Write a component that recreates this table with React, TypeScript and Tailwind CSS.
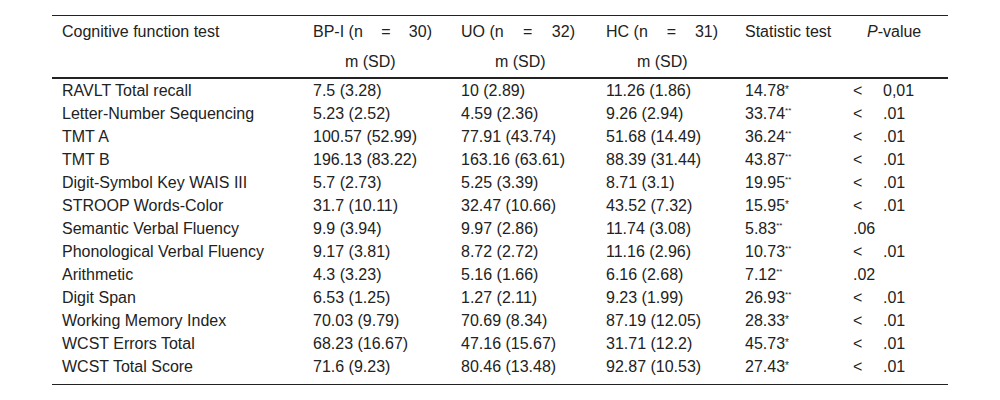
import React from "react";

type Row = {
  name: string;
  bp: string;
  uo: string;
  hc: string;
  stat: string;
  star: "*" | "**";
  lt: boolean;
  p: string;
};

const rows: Row[] = [
  { name: "RAVLT Total recall", bp: "7.5 (3.28)", uo: "10 (2.89)", hc: "11.26 (1.86)", stat: "14.78", star: "*", lt: true, p: "0,01" },
  { name: "Letter-Number Sequencing", bp: "5.23 (2.52)", uo: "4.59 (2.36)", hc: "9.26 (2.94)", stat: "33.74", star: "**", lt: true, p: ".01" },
  { name: "TMT A", bp: "100.57 (52.99)", uo: "77.91 (43.74)", hc: "51.68 (14.49)", stat: "36.24", star: "**", lt: true, p: ".01" },
  { name: "TMT B", bp: "196.13 (83.22)", uo: "163.16 (63.61)", hc: "88.39 (31.44)", stat: "43.87", star: "**", lt: true, p: ".01" },
  { name: "Digit-Symbol Key WAIS III", bp: "5.7 (2.73)", uo: "5.25 (3.39)", hc: "8.71 (3.1)", stat: "19.95", star: "**", lt: true, p: ".01" },
  { name: "STROOP Words-Color", bp: "31.7 (10.11)", uo: "32.47 (10.66)", hc: "43.52 (7.32)", stat: "15.95", star: "*", lt: true, p: ".01" },
  { name: "Semantic Verbal Fluency", bp: "9.9 (3.94)", uo: "9.97 (2.86)", hc: "11.74 (3.08)", stat: "5.83", star: "**", lt: false, p: ".06" },
  { name: "Phonological Verbal Fluency", bp: "9.17 (3.81)", uo: "8.72 (2.72)", hc: "11.16 (2.96)", stat: "10.73", star: "**", lt: true, p: ".01" },
  { name: "Arithmetic", bp: "4.3 (3.23)", uo: "5.16 (1.66)", hc: "6.16 (2.68)", stat: "7.12", star: "**", lt: false, p: ".02" },
  { name: "Digit Span", bp: "6.53 (1.25)", uo: "1.27 (2.11)", hc: "9.23 (1.99)", stat: "26.93", star: "**", lt: true, p: ".01" },
  { name: "Working Memory Index", bp: "70.03 (9.79)", uo: "70.69 (8.34)", hc: "87.19 (12.05)", stat: "28.33", star: "*", lt: true, p: ".01" },
  { name: "WCST Errors Total", bp: "68.23 (16.67)", uo: "47.16 (15.67)", hc: "31.71 (12.2)", stat: "45.73", star: "*", lt: true, p: ".01" },
  { name: "WCST Total Score", bp: "71.6 (9.23)", uo: "80.46 (13.48)", hc: "92.87 (10.53)", stat: "27.43", star: "*", lt: true, p: ".01" },
];

const cols = "grid grid-cols-[251px_148px_145px_139px_108px_105px]";

// header cell text is justified in the source, so the "=" floats between
const GroupHead = ({ label, n, w }: { label: string; n: string; w: string }) => (
  <div className={`flex justify-between ${w}`}>
    <span>{label} (n</span>
    <span>=</span>
    <span>{n})</span>
  </div>
);

const App = () => {
  return (
    <div className="w-[1000px] h-[400px] bg-white pt-[15px] pl-[52px] text-[16px] leading-none text-[#222] font-['Liberation_Sans',Arial,sans-serif]">
      <div className="w-[896px] border-t border-b border-[#222] pb-[6px]">
        <div className={`${cols} h-[31px] items-center`}>
          <div className="pl-[10px]">Cognitive function test</div>
          <div className="pl-[10px]">
            <GroupHead label="BP-I" n="30" w="w-[119px]" />
          </div>
          <div className="pl-[10px]">
            <GroupHead label="UO" n="32" w="w-[114px]" />
          </div>
          <div className="pl-[10px]">
            <GroupHead label="HC" n="31" w="w-[112px]" />
          </div>
          <div className="pl-[10px]">Statistic test</div>
          <div className="pl-[24px]">
            <i>P</i>-value
          </div>
        </div>
        <div className={`${cols} h-[32px] items-center border-b-2 border-[#222]`}>
          <div />
          <div className="pl-[42px]">m (SD)</div>
          <div className="pl-[44px]">m (SD)</div>
          <div className="pl-[41px]">m (SD)</div>
          <div />
          <div />
        </div>
        {rows.map((r) => (
          <div key={r.name} className={`${cols} h-[23px] items-center`}>
            <div className="pl-[10px]">{r.name}</div>
            <div className="pl-[10px]">{r.bp}</div>
            <div className="pl-[10px]">{r.uo}</div>
            <div className="pl-[10px]">{r.hc}</div>
            <div className="pl-[10px]">
              {r.stat}
              {r.star === "*" ? (
                <span className="relative -top-[3px] text-[10px]">*</span>
              ) : (
                <span className="relative -top-[6px] text-[8px]">**</span>
              )}
            </div>
            <div className="pl-[10px] flex">
              {r.lt ? (
                <>
                  <span className="w-[30px]">&lt;</span>
                  <span>{r.p}</span>
                </>
              ) : (
                <span>{r.p}</span>
              )}
            </div>
          </div>
        ))}
      </div>
    </div>
  );
};

export default App;
